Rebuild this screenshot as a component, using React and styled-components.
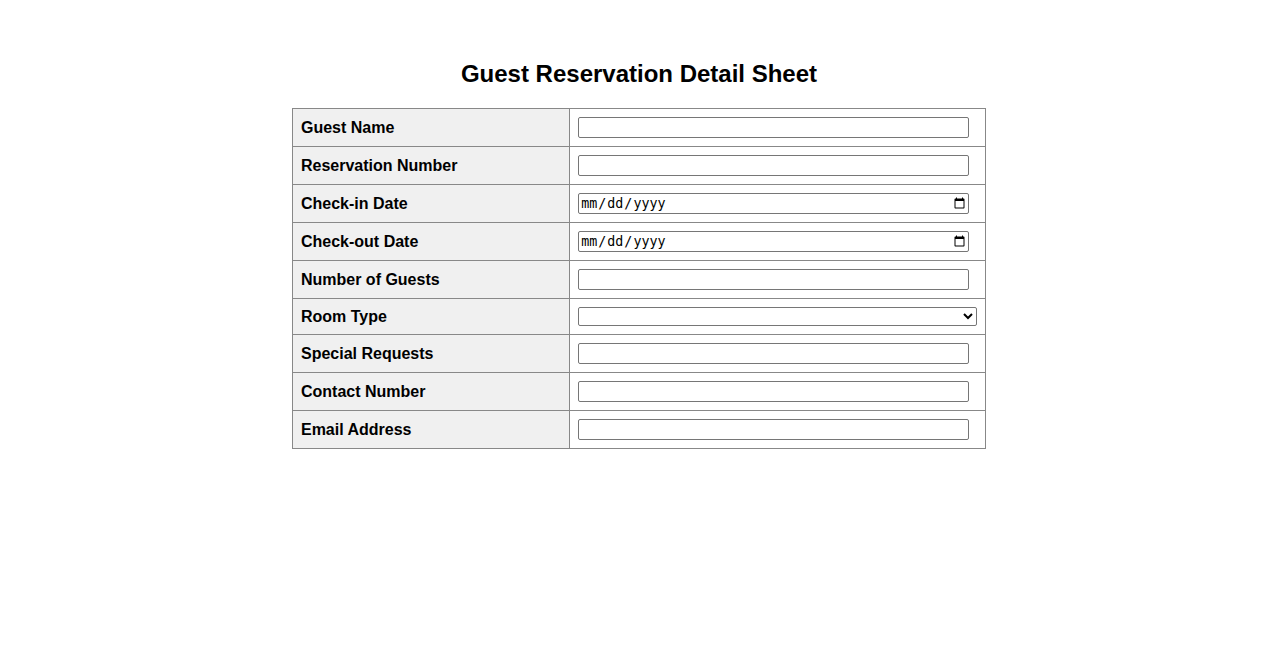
import React from 'react';
import styled, { createGlobalStyle } from 'styled-components';

const fields = [
  { label: 'Guest Name', type: 'text' },
  { label: 'Reservation Number', type: 'text' },
  { label: 'Check-in Date', type: 'date' },
  { label: 'Check-out Date', type: 'date' },
  { label: 'Number of Guests', type: 'number' },
  { label: 'Room Type', type: 'select' },
  { label: 'Special Requests', type: 'text' },
  { label: 'Contact Number', type: 'tel' },
  { label: 'Email Address', type: 'email' },
];

export default function App() {
  return (
    <>
      <GlobalStyle />
      <Sheet>
        <SheetTitle>Guest Reservation Detail Sheet</SheetTitle>
        <DetailTable>
          <tbody>
            {fields.map(field => (
              <DetailRow key={field.label}>
                <LabelCell>{field.label}</LabelCell>
                <ValueCell>
                  {field.type === 'select' ? (
                    <RoomSelect defaultValue="">
                      <option value="" />
                      <option value="single">Single</option>
                      <option value="double">Double</option>
                      <option value="suite">Suite</option>
                    </RoomSelect>
                  ) : (
                    <FieldInput type={field.type} />
                  )}
                </ValueCell>
              </DetailRow>
            ))}
          </tbody>
        </DetailTable>
      </Sheet>
    </>
  );
}

const GlobalStyle = createGlobalStyle`
  body {
    margin: 8px;
    background: #ffffff;
    font-family: "Liberation Sans", Arial, sans-serif;
    color: #000000;
  }
`;

const Sheet = styled.div`
  padding-top: 52px;
`;

const SheetTitle = styled.h1`
  --title-size: 24px;

  margin: 0 0 20px;
  text-align: center;
  font-size: var(--title-size);
  font-weight: bold;
  line-height: 28px;
`;

const DetailTable = styled.table`
  width: 55%;
  margin: 0 auto;
  border-collapse: collapse;
`;

const DetailRow = styled.tr``;

const LabelCell = styled.td`
  width: 40%;
  padding: 8px;
  border: 1px solid #888888;
  background-color: #f0f0f0;
  font-size: 16px;
  font-weight: bold;
`;

const ValueCell = styled.td`
  padding: 8px;
  border: 1px solid #888888;
`;

const FieldInput = styled.input`
  width: 98%;
  box-sizing: border-box;
  height: 21px;
  margin: 0;
  border: 1px solid #767676;
  border-radius: 2px;
  vertical-align: middle;
`;

const RoomSelect = styled.select`
  width: 100%;
  height: 19px;
  margin: 0;
  box-sizing: border-box;
  border: 1px solid #767676;
  border-radius: 2px;
  background: #ffffff;
  vertical-align: middle;
`;
